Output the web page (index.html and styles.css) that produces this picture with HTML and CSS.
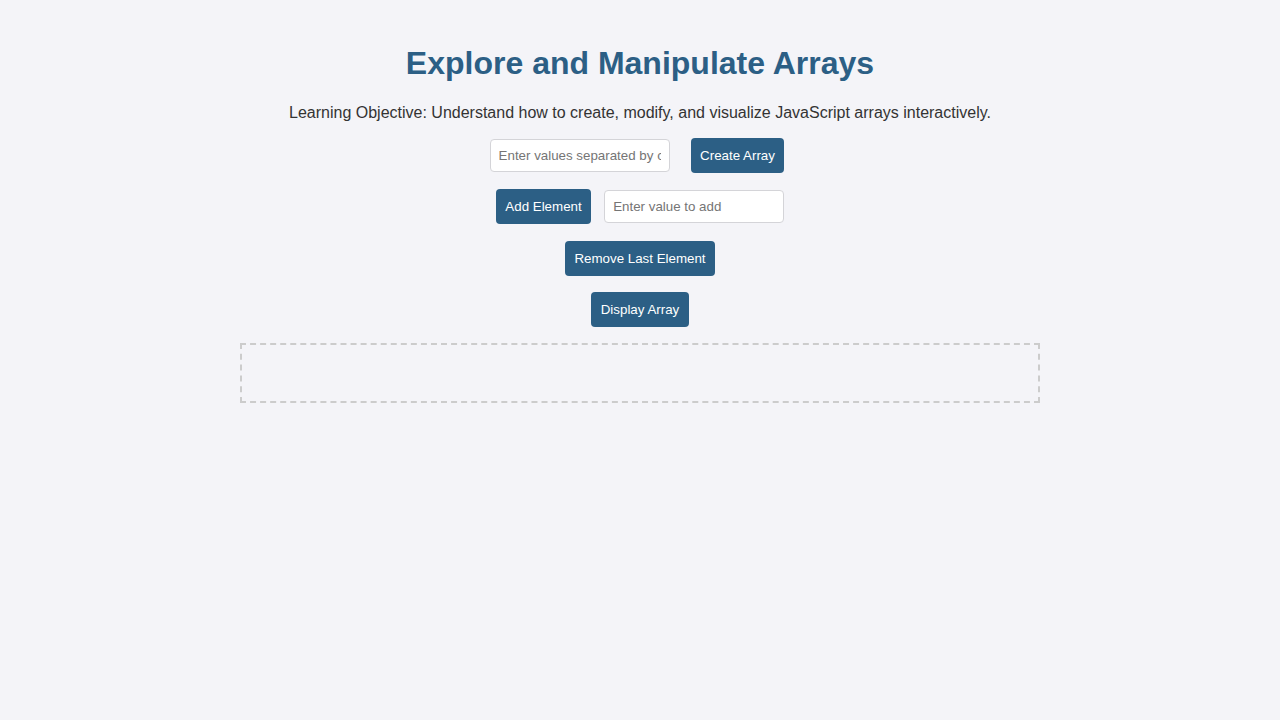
FILE: index.html
```html
<!DOCTYPE html>
<html lang="en">
<head>
<meta charset="utf-8">
<title>Explore and Manipulate Arrays</title>
<link rel="stylesheet" href="styles.css">
</head>
<body>
<main class="container">
  <h1 class="title">Explore and Manipulate Arrays</h1>
  <p class="objective">Learning Objective: Understand how to create, modify, and visualize JavaScript arrays interactively.</p>
  <div class="row row-create">
    <input class="field" type="text" placeholder="Enter values separated by commas">
    <button class="btn">Create Array</button>
  </div>
  <div class="row row-add">
    <button class="btn">Add Element</button>
    <input class="field" type="text" placeholder="Enter value to add">
  </div>
  <div class="row row-remove">
    <button class="btn">Remove Last Element</button>
  </div>
  <div class="row">
    <button class="btn">Display Array</button>
  </div>
  <div class="display"></div>
</main>
</body>
</html>
```
FILE: styles.css
```css
html, body {
  margin: 0;
  padding: 0;
}
body {
  background: #f4f4f8;
  font-family: "Liberation Sans", Arial, sans-serif;
  color: #333;
}
.container {
  width: 800px;
  margin: 0 auto;
  padding-top: 42px;
  display: flex;
  flex-direction: column;
  align-items: center;
}
.title {
  margin: 0;
  font-size: 32px;
  line-height: 42px;
  font-weight: bold;
  color: #2c5f85;
}
.objective {
  margin: 17px 0 0;
  font-size: 16px;
  line-height: 24px;
}
.row {
  display: flex;
  justify-content: center;
  align-items: center;
  margin-top: 16px;
  height: 35px;
}
.row-create {
  margin-top: 13px;
  gap: 21px;
  padding-right: 6px;
}
.row-add {
  gap: 13px;
}
.row-remove {
  margin-top: 17px;
}
.field {
  box-sizing: border-box;
  width: 180px;
  height: 33px;
  padding: 0 8px;
  border: 1px solid #d4d4d8;
  border-radius: 4px;
  background: #fff;
  font-family: "Liberation Sans", Arial, sans-serif;
  font-size: 13.33px;
  color: #333;
}
.field::placeholder {
  color: #757575;
}
.btn {
  box-sizing: border-box;
  height: 35px;
  padding: 0 9.5px;
  border: none;
  border-radius: 4px;
  background: #2c5f85;
  color: #fff;
  font-family: "Liberation Sans", Arial, sans-serif;
  font-size: 13.33px;
  cursor: pointer;
}
.display {
  box-sizing: border-box;
  width: 800px;
  height: 60px;
  margin-top: 16px;
  border: 2px dashed #cccccc;
}
```
